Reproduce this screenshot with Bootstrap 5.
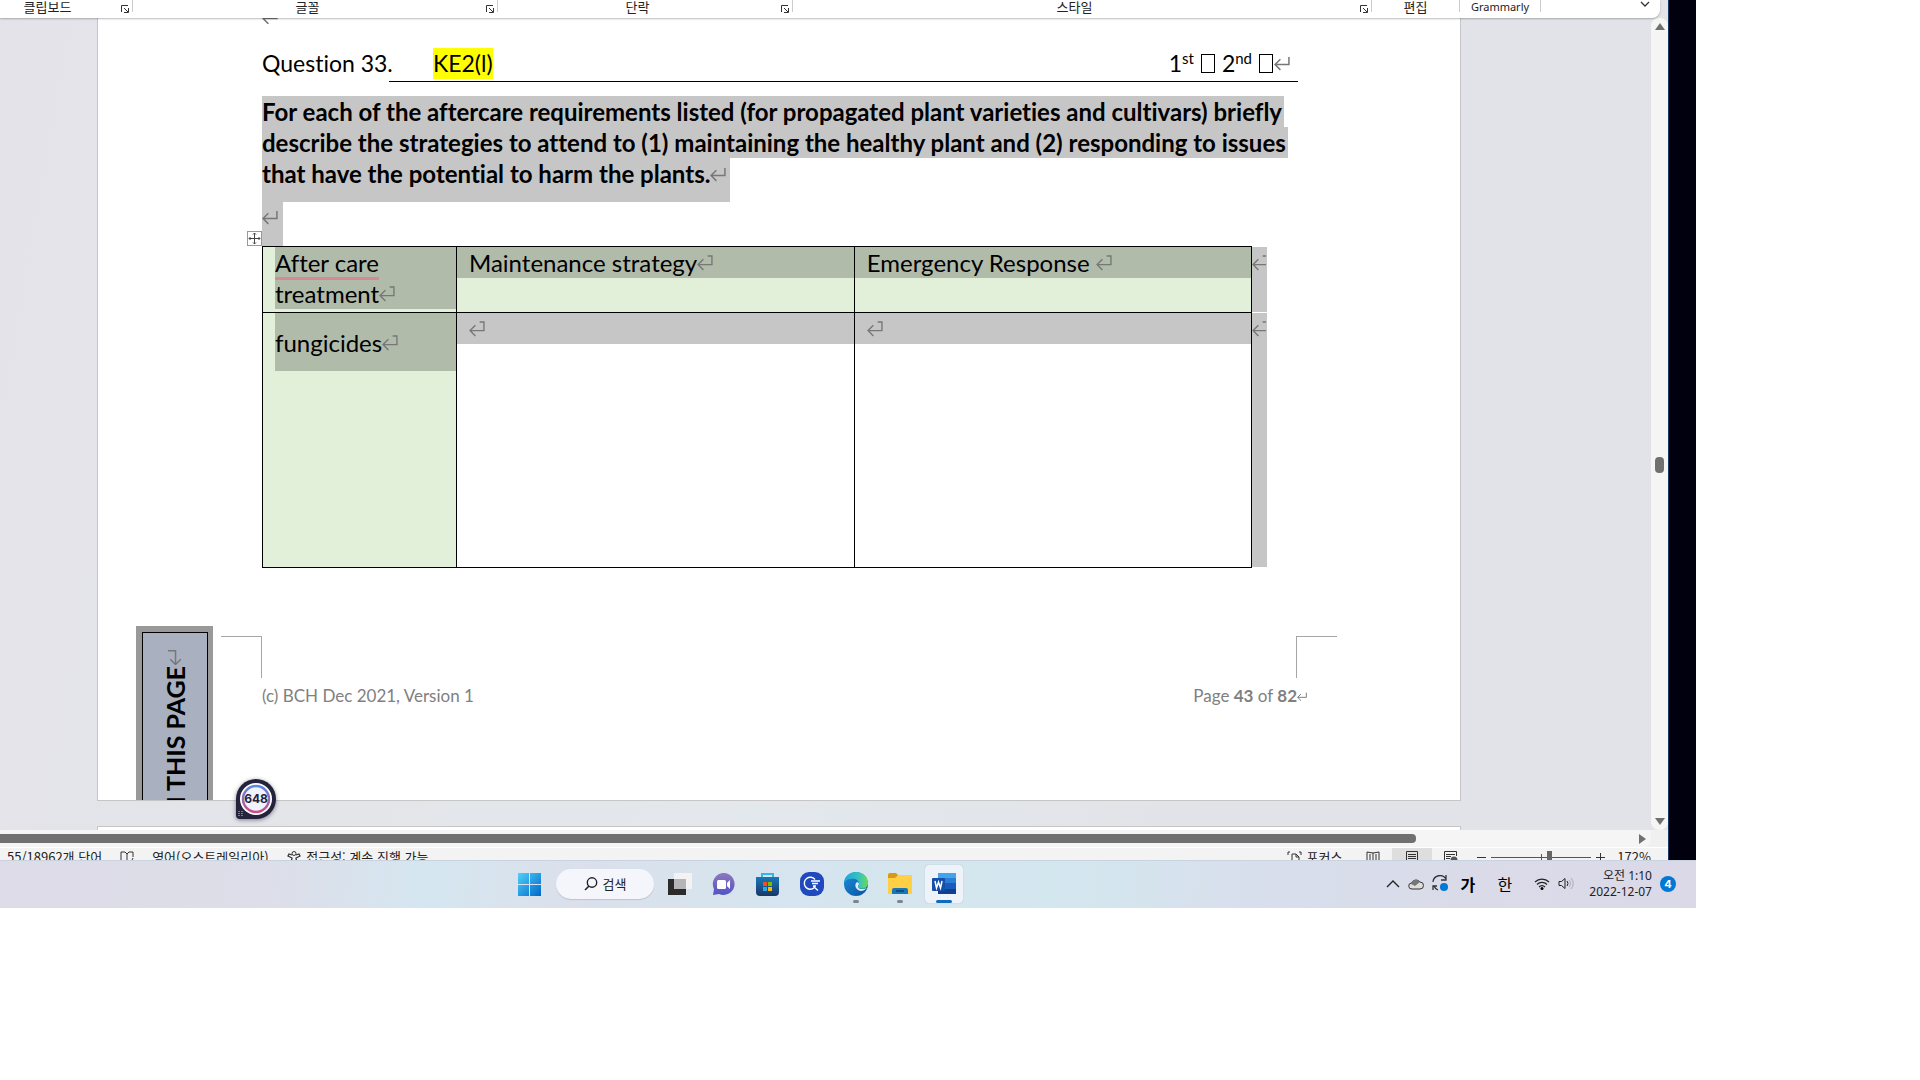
<!DOCTYPE html>
<html lang="ko">
<head>
<meta charset="utf-8">
<meta name="viewport" content="width=device-width, initial-scale=1">
<title>Word - Question 33</title>
<link href="https://cdn.jsdelivr.net/npm/bootstrap@5.3.0/dist/css/bootstrap.min.css" rel="stylesheet">
<style>
  :root { --sel: #c6c6c6; --leaf: #e2efd9; --leaf-sel: #b0bbaa; --track: #f5f5f5; --thumb: #707070; }
  body { background: #fff; font-family: "Noto Sans CJK KR", "Noto Sans", sans-serif; font-size: 13px; color: #222; }
  button { padding: 0; border: 0; background: none; color: inherit; font: inherit; line-height: 1; }
  svg { display: block; flex: none; }
  .desktop { width: 88.333%; }
  .backdrop { background: #00000f; padding-right: 27px; }
  .word-win { background: #e3e4e9; border-right: 1px solid #17375f; overflow: hidden; }

  .ribbon { height: 18px; margin-right: 8px; background: #fff; border-radius: 0 0 8px 0; box-shadow: 0 1px 2px #0004; z-index: 2; }
  .ribbon-group { height: 12px; border-right: 1px solid #ccc; line-height: 14px; flex: none; }
  .g-clip { width: 155px; margin-left: -22px; }
  .g-font { width: 365px; } .g-para { width: 295px; } .g-style { width: 579px; }
  .g-edit { width: 88px; } .g-gram { width: 81px; }
  .launcher { width: 15px; padding: 4px 0 0 3px; }
  .gram-name { font-family: "Noto Sans", sans-serif; font-size: 11px; }
  .more { margin-right: 10px; }

  .workarea { background: linear-gradient(100deg, #e4e3e9, #e3e5e9 25%, #e3e8ec 50%, #e2e3e8 75%); padding: 0 190px 0 97px; height: 812px; overflow: hidden; }
  .sheet { background: #fff; border: 1px solid #c6c6c6; border-top: 0; height: 783px; padding: 0 162px 0 164px; font-family: Lato, sans-serif; font-size: 24px; line-height: 31px; color: #000; font-variant-ligatures: none; }
  .next-sheet { margin-top: 25px; background: #fff; border: 1px solid #c6c6c6; height: 40px; }
  .ret { display: inline-block; width: 16px; height: 16px; color: #777; vertical-align: baseline; }
  .stub { height: 6px; overflow: hidden; }
  .stub .ret { display: block; margin-top: -8px; }
  .q-head { margin-top: 24px; padding-right: 8px; font-size: 23px; }
  .q-num { width: 171px; }
  .hilite { background: #ff0; }
  .q-head sup { font-size: 15px; top: -8px; line-height: 0; }
  .tick { appearance: none; width: 14px; height: 19px; border: 1px solid #000; margin: 0 7px; border-radius: 0; background: #fff; }
  .tick.last { margin-right: 1px; }
  .rule { margin: 2px 0 14px 127px; border: 0; border-top: 1px solid #000; opacity: 1; }
  .prompt { margin: 0; font-weight: 700; }
  .prompt span { display: block; width: fit-content; background: var(--sel); padding-right: 2px; white-space: nowrap; }
  .prompt .closing { padding-bottom: 13px; padding-right: 4px; }
  .gap-line { width: 21px; height: 44px; padding-top: 8px; background: var(--sel); }
  .gap-line > .ret { display: block; }
  .mover { left: -15px; bottom: 0; width: 15px; height: 15px; border: 1px solid #999; background: #fff; }

  .care { width: 97%; border-collapse: collapse; table-layout: fixed; }
  .care th, .care td { border: 1px solid #000; padding: 0; vertical-align: top; font-weight: 400; }
  .care .head-row { height: 66px; } .care .body-row { height: 255px; }
  .care .c1 { width: 194px; } .care .c4 { width: 15px; }
  .care .leaf { background: var(--leaf); }
  .care .row-end { border: 0; border-bottom: 1px solid #fff; background: var(--sel); }
  .pick { background: var(--leaf-sel); padding-left: 12px; white-space: nowrap; }
  .pick.plain { background: var(--sel); }
  .pick.inset { margin-left: 12px; padding-left: 0; }
  .pick.tall { padding: 14px 0 13px; }
  .pick .ret, .row-end .ret { vertical-align: 1px; }
  .grammar { border-bottom: 3px solid #d68a92; display: inline-block; height: 33px; margin-bottom: -2px; }
  .row-end div { width: 14px; overflow: hidden; }

  .crops { margin: 68px -41px 0 -41px; }
  .crop { width: 41px; height: 42px; border-top: 1px solid #a6a6a6; }
  .crop.l { border-right: 1px solid #a6a6a6; } .crop.r { border-left: 1px solid #a6a6a6; margin-right: 2px; }
  .foot { font-size: 17px; line-height: 22px; color: #808080; padding-top: 7px; margin-right: -9px; }
  .foot .ret { width: 10px; height: 10px; }
  .side-tab { left: 38px; top: 608px; width: 77px; height: 174px; background: #999; padding: 6px 5px 0 6px; overflow: hidden; }
  .side-in { height: 200px; border: 1px solid #000; background: #a9b1c0; padding-top: 17px; }
  .side-in b { writing-mode: vertical-rl; transform: rotate(180deg); font-size: 25px; line-height: 30px; white-space: nowrap; }
  .side-in .ret { transform: rotate(90deg); }
  .counter { left: 236px; top: 779px; width: 40px; height: 40px; background: #23233c; border-radius: 20px 20px 20px 4px; box-shadow: 0 1px 4px #2238; z-index: 3; }
  .counter svg { position: absolute; inset: 0; }
  .counter b { position: relative; font: 700 12px/40px Inter, sans-serif; color: #23233c; display: block; text-align: center; }

  .vbar { width: 17px; background: var(--track); border-radius: 8px; padding: 5px 0; flex: none; }
  .vthumb { width: 9px; height: 16px; border-radius: 4px; background: var(--thumb); margin-bottom: -82px; }
  .hbar { height: 17px; margin-right: 17px; padding-right: 5px; background: var(--track); border-radius: 0 0 8px 0; }
  .hthumb { width: 1416px; height: 9px; border-radius: 0 4px 4px 0; background: var(--thumb); }
  .lower { background: #f0f0f0; }
  .status { height: 13px; background: #f3f3f3; border-top: 1px solid #fff; overflow: hidden; line-height: 18px; padding: 0 17px 0 7px; white-space: nowrap; }
  .status svg { margin-top: 3px; }
  .near { margin-left: 12px; } .mid { margin-left: 18px; }
  .st-on { background: #dedede; width: 40px; padding-left: 14px; height: 20px; }
  .zoomer { appearance: none; width: 100px; height: 14px; margin: 2px 5px 0; background: linear-gradient(#555, #555) 0 7px / 100% 1px no-repeat, linear-gradient(#555, #555) 50px 4px / 1px 7px no-repeat; }
  .zoomer::-webkit-slider-thumb { appearance: none; width: 5px; height: 12px; background: #666; }

  .taskbar { height: 48px; border-top: 1px solid #c9d3dd; background: linear-gradient(95deg, #dddce8 0, #dddee9 16%, #d5e6f0 25%, #dbe0eb 34%, #d6e4ee 44%, #d3e7ef 62%, #d8dfec 74%, #dadbe9 86%, #dbd9e7); padding: 0 20px 2px 518px; }
  .apps { gap: 20px; }
  .search { width: 98px; height: 30px; border-radius: 15px; background: #f4f6fb; box-shadow: 0 1px 1px #0002; margin: 0 -6px; font-size: 13px; gap: 5px; }
  .app { width: 24px; height: 24px; }
  .app.live::after { content: ""; position: absolute; left: 9px; top: 28px; width: 6px; height: 3px; border-radius: 2px; background: #7b858e; }
  .app.open::before { content: ""; position: absolute; inset: -7px; background: #edf3f9; border-radius: 4px; box-shadow: 0 0 1px #0004; }
  .app.open::after { left: 4px; width: 16px; background: #0f6cbd; }
  .app svg { position: relative; }
  .tray > * { margin-right: 8px; }
  .tray > .sync { margin-right: 11px; }
  .tray > .ime { font-size: 16px; color: #000; width: 16px; margin-right: 21px; }
  .tray > .alerts { margin-right: 0; }
  .clock { font-family: "Noto Sans", "Noto Sans CJK KR", sans-serif; font-size: 12px; line-height: 16px; width: 70px; }
  .alerts { width: 16px; height: 16px; border-radius: 8px; background: #0078d4; color: #fff; font: 700 11px/16px Inter, sans-serif; }
</style>
<script src="https://cdn.jsdelivr.net/npm/bootstrap@5.3.0/dist/js/bootstrap.bundle.min.js"></script>
</head>
<body>
<svg width="0" height="0" class="position-absolute" aria-hidden="true">
  <symbol id="ret" viewBox="0 0 15 15"><path d="M14 1v7H1M6 3 1 8l5 5" fill="none" stroke="currentColor" stroke-width="1.400"/></symbol>
  <symbol id="cellret" viewBox="0 0 15 15"><path d="M10 1h4v8H1M6 4 1 9l5 5" fill="none" stroke="currentColor" stroke-width="1.300"/></symbol>
  <symbol id="launch" viewBox="0 0 9 9"><path d="M1.500 8V1.500H8M4 4l4 4M8.500 4v4.500H4" fill="none" stroke="#333"/></symbol>
</svg>

<div class="desktop">
  <div class="backdrop">
    <div class="word-win position-relative">
      <header class="ribbon d-flex position-relative">
        <div class="ribbon-group g-clip d-flex"><span class="flex-fill text-center">클립보드</span><button class="launcher" aria-label="클립보드 옵션"><svg width="9" height="9"><use href="#launch"/></svg></button></div>
        <div class="ribbon-group g-font d-flex"><span class="flex-fill text-center">글꼴</span><button class="launcher" aria-label="글꼴 옵션"><svg width="9" height="9"><use href="#launch"/></svg></button></div>
        <div class="ribbon-group g-para d-flex"><span class="flex-fill text-center">단락</span><button class="launcher" aria-label="단락 옵션"><svg width="9" height="9"><use href="#launch"/></svg></button></div>
        <div class="ribbon-group g-style d-flex"><span class="flex-fill text-center">스타일</span><button class="launcher" aria-label="스타일 옵션"><svg width="9" height="9"><use href="#launch"/></svg></button></div>
        <div class="ribbon-group g-edit text-center">편집</div>
        <div class="ribbon-group g-gram text-center gram-name">Grammarly</div>
        <button class="more ms-auto align-self-start" aria-label="리본 접기"><svg width="10" height="9" viewBox="0 0 10 9"><path d="m1 2 4 4 4-4" fill="none" stroke="#333" stroke-width="1.300"/></svg></button>
      </header>

      <div class="d-flex">
        <main class="workarea flex-fill">
          <article class="sheet position-relative">
            <div class="stub"><svg class="ret"><use href="#ret"/></svg></div>
            <div class="q-head d-flex">
              <span class="q-num">Question 33.</span><span class="hilite">KE2(l)</span>
              <span class="ms-auto d-flex align-items-center">
                <label for="first">1<sup>st</sup></label><input class="tick" type="checkbox" id="first">
                <label for="second">2<sup>nd</sup></label><input class="tick last" type="checkbox" id="second">
                <svg class="ret"><use href="#ret"/></svg>
              </span>
            </div>
            <hr class="rule">
            <p class="prompt">
              <span>For each of the aftercare requirements listed (for propagated plant varieties and cultivars) briefly</span>
              <span>describe the strategies to attend to (1) maintaining the healthy plant and (2) responding to issues</span>
              <span class="closing">that have the potential to harm the plants.<svg class="ret"><use href="#ret"/></svg></span>
            </p>
            <div class="gap-line position-relative"><svg class="ret"><use href="#ret"/></svg>
              <button class="mover position-absolute" aria-label="표 이동"><svg width="13" height="13" viewBox="0 0 13 13"><path d="M6.500 1v11M1 6.500h11M5 2.500 6.500 1 8 2.500M5 10.500 6.500 12 8 10.500M2.500 5 1 6.500 2.500 8M10.500 5 12 6.500 10.500 8" fill="none" stroke="#444"/></svg></button>
            </div>
            <table class="care">
              <colgroup><col class="c1"><col><col><col class="c4"></colgroup>
              <tr class="head-row">
                <th class="leaf"><div class="pick inset"><span class="grammar">After care</span><br>treatment<svg class="ret"><use href="#cellret"/></svg></div></th>
                <th class="leaf"><div class="pick">Maintenance strategy<svg class="ret"><use href="#cellret"/></svg></div></th>
                <th class="leaf"><div class="pick">Emergency Response <svg class="ret"><use href="#cellret"/></svg></div></th>
                <td class="row-end"><div><svg class="ret"><use href="#cellret"/></svg></div></td>
              </tr>
              <tr class="body-row">
                <td class="leaf"><div class="pick inset tall">fungicides<svg class="ret"><use href="#cellret"/></svg></div></td>
                <td><div class="pick plain"><svg class="ret"><use href="#cellret"/></svg></div></td>
                <td><div class="pick plain"><svg class="ret"><use href="#cellret"/></svg></div></td>
                <td class="row-end"><div><svg class="ret"><use href="#cellret"/></svg></div></td>
              </tr>
            </table>
            <div class="crops d-flex justify-content-between"><div class="crop l"></div><div class="crop r"></div></div>
            <footer class="foot d-flex justify-content-between">
              <span>(c) BCH Dec 2021, Version 1</span>
              <span>Page <b>43</b> of <b>82</b><svg class="ret"><use href="#ret"/></svg></span>
            </footer>
            <aside class="side-tab position-absolute"><div class="side-in d-flex justify-content-center align-items-start"><b>N THIS PAGE<svg class="ret"><use href="#ret"/></svg></b></div></aside>
          </article>
          <div class="next-sheet"></div>
        </main>
        <div class="vbar d-flex flex-column align-items-center justify-content-between">
          <svg width="10" height="8"><path d="M5 0 10 7H0z" fill="#707070"/></svg>
          <div class="vthumb"></div>
          <svg width="10" height="8"><path d="M0 1h10L5 8z" fill="#707070"/></svg>
        </div>
      </div>
      <button class="counter position-absolute" aria-label="단어 수">
        <svg width="40" height="40" viewBox="0 0 40 40"><defs><linearGradient id="ring" x2="0" y2="1"><stop stop-color="#5b8ae0"/><stop offset="1" stop-color="#c94f86"/></linearGradient></defs><circle cx="20" cy="20" r="16" fill="#fff"/><circle cx="20" cy="20" r="13" fill="#f1f2fd" stroke="url(#ring)" stroke-width="2.500"/><path d="M3 32v6M6 32v6" stroke="#ccd" stroke-dasharray="1 1"/></svg>
        <b>648</b>
      </button>

      <div class="lower">
        <div class="hbar d-flex align-items-center justify-content-between"><div class="hthumb"></div><svg width="7" height="10"><path d="M0 0 7 5 0 10z" fill="#707070"/></svg></div>
        <footer class="status d-flex">
          <span>55/18962개 단어</span>
          <svg class="mid" width="14" height="14" viewBox="0 0 14 14"><path d="M1 12V1h4l2 2 2-2h4v5M7 3v8M1 11h5M9 9l2 2 2-4" fill="none" stroke="#333"/></svg>
          <span class="mid">영어(오스트레일리아)</span>
          <svg class="mid" width="16" height="14" viewBox="0 0 16 14"><circle cx="7" cy="2.500" r="2" fill="none" stroke="#333"/><path d="M5 4 2 3 1 5l4 2-1 6M9 4l3-1 1 2-4 2 1 6M13 9v1" fill="none" stroke="#333" stroke-width="1.300"/></svg>
          <span>&nbsp;접근성: 계속 진행 가능</span>
          <svg class="ms-auto" width="15" height="14" viewBox="0 0 15 14"><path d="M1 4V1h2M12 1h2v3M5 13V3h4l3 3v7M9 3v3h3" fill="none" stroke="#333"/></svg>
          <span class="ms-1">포커스</span>
          <svg class="ms-4" width="14" height="14" viewBox="0 0 14 14"><path d="M7 2 1 1v10l6 1 6-1V1zv10M3 4h2M3 6h2M3 8h2M9 4h2M9 6h2M9 8h2" fill="none" stroke="#333"/></svg>
          <span class="st-on near"><svg width="12" height="14" viewBox="0 0 12 14"><path d="M.5.5h11v13H.5zM2 3.500h8M2 5.500h8M2 7.500h8M2 9.500h8" fill="none" stroke="#333"/></svg></span>
          <svg class="near" width="14" height="14" viewBox="0 0 14 14"><path d="M.5 13V.5h12V5M2 3.500h9M2 5.500h5M2 7.500h4" fill="none" stroke="#333"/><circle cx="10" cy="9" r="3.500" fill="#555"/></svg>
          <svg class="ms-3" width="12" height="14"><path d="M3 6.500h9" stroke="#333"/></svg>
          <input class="zoomer" type="range" min="10" max="190" value="115" aria-label="확대/축소">
          <svg width="9" height="14"><path d="M0 6.500h9M4.500 2v9" stroke="#333"/></svg>
          <span class="near">172%</span>
        </footer>
      </div>
    </div>
  </div>

  <nav class="taskbar d-flex align-items-center justify-content-between">
    <div class="apps d-flex align-items-center">
      <button class="app" aria-label="시작"><svg width="24" height="24"><defs><linearGradient id="win" x2="1" y2="1"><stop stop-color="#4fd0fb"/><stop offset="1" stop-color="#0067c8"/></linearGradient></defs><path d="M0 1h11v11H0zM12 1h11v11H12zM0 13h11v11H0zM12 13h11v11H12z" fill="url(#win)"/></svg></button>
      <button class="search d-flex align-items-center justify-content-center"><svg width="14" height="14" viewBox="0 0 14 14"><circle cx="8" cy="5.500" r="4.700" fill="none" stroke="#222" stroke-width="1.400"/><path d="m5 9-4 4" stroke="#222" stroke-width="1.600"/></svg>검색</button>
      <button class="app" aria-label="작업 보기"><svg width="24" height="24"><path d="M6 1h18v16H6z" fill="#f3f3f3"/><path d="M0 7h18v16H0z" fill="#2b2b2b"/><path d="M6 7h12v10H6z" fill="#b5b5b5"/></svg></button>
      <button class="app" aria-label="채팅"><svg width="24" height="24"><defs><linearGradient id="chat" x2="0" y2="1"><stop stop-color="#8d78bd"/><stop offset="1" stop-color="#5353c5"/></linearGradient></defs><path d="M12 1a11 11 0 1 1-5 21l-6 1 1-6A11 11 0 0 1 12 1z" fill="url(#chat)"/><rect x="5" y="8" width="9" height="9" rx="1.500" fill="#fff"/><path d="m15 11 3-3v9l-3-3z" fill="#fff"/></svg></button>
      <button class="app" aria-label="스토어"><svg width="24" height="24"><defs><linearGradient id="bag" x2="0" y2="1"><stop stop-color="#1778b8"/><stop offset="1" stop-color="#1c3764"/></linearGradient></defs><path d="M6 6V2h11v4" fill="none" stroke="#35b5ec" stroke-width="2"/><path d="M0 5h23v15a4 4 0 0 1-4 4H4a4 4 0 0 1-4-4z" fill="url(#bag)"/><path d="M7 10h4v4H7z" fill="#f25022"/><path d="M12 10h4v4h-4z" fill="#7fba00"/><path d="M7 15h4v4H7z" fill="#2aa7ee"/><path d="M12 15h4v4h-4z" fill="#ffb900"/></svg></button>
      <button class="app" aria-label="빠른 검색"><svg width="24" height="24"><rect width="24" height="24" rx="9" fill="#1f49bd"/><path d="M15 7.500A6 6 0 1 0 14 16M13.500 14.500l4.500 4M11 9h9M12 11.500h6M13 14h3" fill="none" stroke="#fff" stroke-width="1.400"/></svg></button>
      <button class="app live position-relative" aria-label="Edge"><svg width="24" height="24"><defs><linearGradient id="e1"><stop stop-color="#1ba4e0"/><stop offset=".6" stop-color="#35c1c0"/><stop offset="1" stop-color="#6adb55"/></linearGradient><linearGradient id="e2" x2="1" y2="1"><stop stop-color="#1b8fdc"/><stop offset="1" stop-color="#0b4f9d"/></linearGradient></defs><circle cx="12" cy="12" r="12" fill="url(#e2)"/><path d="M0 11C1-3 23-4 24 11c0 5-5 7-9 5-2-1 0-2 0-4 0-4-4-6-8-5-4 0-6 2-7 4z" fill="url(#e1)"/><path d="M13 10c-3 2-2 8 4 9 2 0 4-1 6-3-2 1-8 2-9-1 0-2 1-2 1-3s-1-2-2-2z" fill="#d8edf5"/></svg></button>
      <button class="app live position-relative" aria-label="파일 탐색기"><svg width="24" height="24"><path d="M0 3a2 2 0 0 1 2-2h6l2 2v4H0z" fill="#d99a12"/><path d="M0 6h7l3-3h14v19H0z" fill="#ffcf45"/><path d="M4 22v-4a2 2 0 0 1 2-2h12a2 2 0 0 1 2 2v4z" fill="#1976b7"/><path d="M8 19h8" stroke="#0b4f85" stroke-width="2"/></svg></button>
      <button class="app live open position-relative" aria-label="Word"><svg width="24" height="24" viewBox="0 0 24 24"><path d="M6 1h18v6H6z" fill="#41a5ee"/><path d="M6 6h18v6H6z" fill="#2b7cd3"/><path d="M6 11h18v6H6z" fill="#185abd"/><path d="M6 17h18v5H6z" fill="#103f91"/><rect y="6" width="13" height="13" rx="1" fill="#174fa8"/><path d="m3 9 1.500 7 2-6 2 6L10 9" fill="none" stroke="#fff" stroke-width="1.500"/></svg></button>
    </div>
    <div class="tray d-flex align-items-center">
      <button aria-label="숨겨진 아이콘"><svg width="14" height="10"><path d="m1 8 6-6 6 6" fill="none" stroke="#222" stroke-width="1.400"/></svg></button>
      <button aria-label="OneDrive"><svg width="16" height="12" viewBox="0 0 16 12"><path d="M4 11a3 3 0 0 1-.500-6A5 5 0 0 1 12 4a3.500 3.500 0 0 1 0 7z" fill="#ddd" stroke="#333"/><path d="M3 6a5 5 0 0 1 9-2L7 8z" fill="#777"/></svg></button>
      <button class="sync" aria-label="업데이트"><svg width="17" height="17" viewBox="0 0 17 17"><path d="M1 7a7 7 0 0 1 13-3M14 0v5H9M6 15a7 7 0 0 1-4-4M1 15v-4h4" fill="none" stroke="#333" stroke-width="1.300"/><circle cx="12" cy="12" r="4" fill="#0078d4"/></svg></button>
      <button class="ime fw-bold" aria-label="입력기">가</button>
      <button class="ime" aria-label="한글">한</button>
      <button aria-label="네트워크"><svg width="16" height="13" viewBox="0 0 16 13"><path d="M1 5a10 10 0 0 1 14 0M3 7.500a7 7 0 0 1 10 0M5 10a4 4 0 0 1 6 0" fill="none" stroke="#222" stroke-width="1.200"/><circle cx="8" cy="11.500" r="1.500"/></svg></button>
      <button aria-label="소리"><svg width="16" height="13" viewBox="0 0 16 13"><path d="M1 4.500h2.500L7 1.500v10l-3.500-3H1z" fill="none" stroke="#222"/><path d="M9 4a4 4 0 0 1 0 5" fill="none" stroke="#222"/><path d="M11 3a5 5 0 0 1 0 7M13 1a8 8 0 0 1 0 11" fill="none" stroke="#aab"/></svg></button>
      <div class="clock text-end">오전 1:10<br>2022-12-07</div>
      <button class="alerts" aria-label="알림">4</button>
    </div>
  </nav>
</div>
</body>
</html>
